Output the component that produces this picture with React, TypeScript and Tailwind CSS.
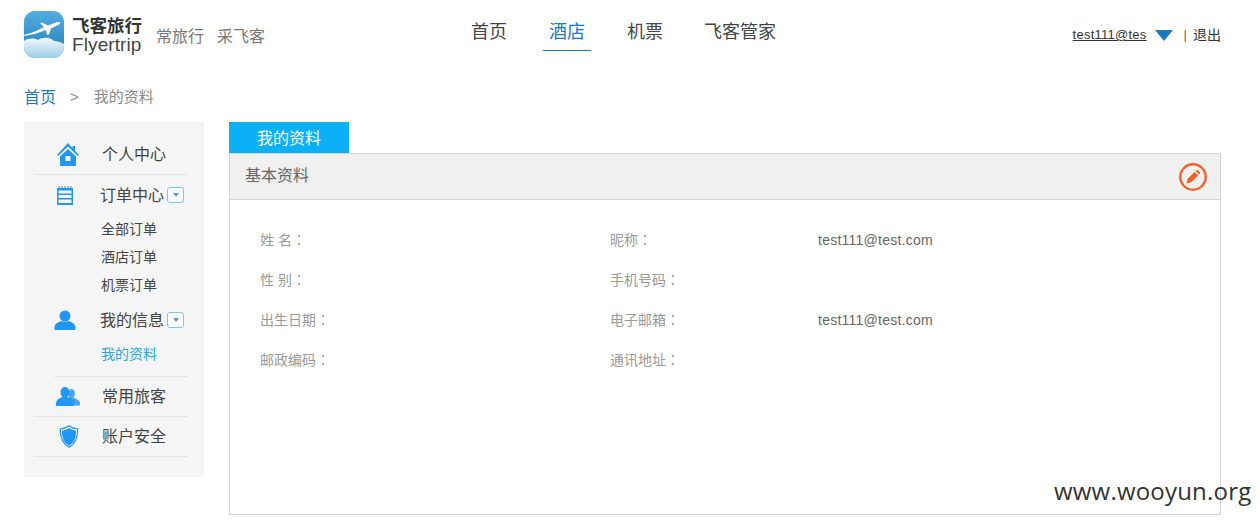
import React from 'react';

const cjk = "font-['Liberation_Sans','Noto_Sans_CJK_SC',sans-serif]";

function Logo() {
  return (
    <svg width="40" height="47" viewBox="0 0 40 47" className="shrink-0">
      <defs>
        <linearGradient id="sky" x1="0" y1="0" x2="0" y2="1">
          <stop offset="0" stopColor="#52ade0" />
          <stop offset="0.7" stopColor="#2f8cc4" />
          <stop offset="1" stopColor="#4b9ccf" />
        </linearGradient>
        <linearGradient id="cloud" x1="0" y1="0" x2="0" y2="1">
          <stop offset="0" stopColor="#f2f8fc" />
          <stop offset="1" stopColor="#9ccbe8" />
        </linearGradient>
        <clipPath id="logoClip">
          <rect width="40" height="47" rx="11" />
        </clipPath>
      </defs>
      <g clipPath="url(#logoClip)">
        <rect width="40" height="47" fill="url(#sky)" />
        <path d="M0 47V30c4-3 10-3 14-1 4-3 12-3 16 1 3 0 7 1 10 3v14z" fill="url(#cloud)" />
        <path d="M0 24c8-2 14-5 20-8l-4-4 2-.5 6 3 8-3c3-1 6 0 3 2l-8 4-2 6-2 .5-1-5c-7 3-14 5-22 6z" fill="#fff" />
      </g>
    </svg>
  );
}

function HomeIcon() {
  return (
    <svg width="24" height="24" viewBox="0 0 24 24">
      <path fill="#2196f3" d="M12 1 1 13l1.2 1L12 4.5 21.8 14l1.2-1-4-4.300V4h-2.500v2.200zM4 14.500V24h16v-9.500l-8-7.500zM9.500 14h5v5h-5z" fillRule="evenodd" />
    </svg>
  );
}

function ListIcon() {
  return (
    <svg width="18" height="20" viewBox="0 0 18 20">
      <path fill="#2196f3" fillRule="evenodd" d="M1 3h1.500V1h1v2h2V1h1v2h2V1h1v2h2V1h1v2h2V1h1v2H17v17H1zM2.500 5.500v3h13v-3zm0 4.500v3h13v-3zm0 4.500v3.500h13v-3.500z" />
    </svg>
  );
}

function UserIcon() {
  return (
    <svg width="22" height="20" viewBox="0 0 22 20">
      <circle cx="11" cy="6" r="5.500" fill="#2196f3" />
      <path fill="#2196f3" d="M7.500 11c1 1 6 1 7 0 3 1 6.500 2.500 7 6v3H.5v-3c.5-3.500 4-5 7-6z" />
    </svg>
  );
}

function UsersIcon() {
  return (
    <svg width="24" height="19" viewBox="0 0 24 19">
      <path fill="#2196f3" d="M15 2c2.500 0 3.800 2 3.800 4.500 0 1.800-.8 3.200-1.800 4 2.500 1 6.500 2.500 7 5.500v2.500h-6c0-3-2.500-5.500-5-6.500V9c-.5-4 .5-7 2-7z" opacity="0.85" />
      <path fill="#2196f3" d="M9 0c2.800 0 4.500 2.400 4.500 5.500 0 2-.9 3.700-2 4.500 3 1 6.500 3 6.500 6.500V19H0v-2.500C0 13 3.500 11 6.500 10c-1.100-.8-2-2.500-2-4.500C4.500 2.400 6.200 0 9 0z" />
    </svg>
  );
}

function ShieldIcon() {
  return (
    <svg width="20" height="23" viewBox="0 0 20 23" className="ml-[2px]">
      <path fill="none" stroke="#2196f3" strokeWidth="1.200" d="M10 .8c2.500 2 5.500 3 8.800 3.200 0 7-1 14-8.800 18.200C2.200 18 1.200 11 1.200 4 4.500 3.800 7.500 2.800 10 .8z" />
      <path fill="#2196f3" d="M10 3c2.200 1.500 4.500 2.400 7 2.700 0 5.800-1 11.500-7 15-6-3.500-7-9.200-7-15C5.500 5.400 7.800 4.500 10 3z" />
    </svg>
  );
}

function Toggle() {
  return (
    <span className="ml-[3px] flex h-[16px] w-[17px] items-center justify-center rounded-[3px] border border-[#7cc4ea] bg-white">
      <span className="h-0 w-0 border-x-[3.500px] border-t-[4px] border-x-transparent border-t-[#5a9fc8]" />
    </span>
  );
}

function MenuRow({ icon, label, toggle, short }: { icon: React.ReactNode; label: string; toggle?: boolean; short?: boolean }) {
  return (
    <div className={`flex items-center ${short ? 'h-[39px]' : 'h-[40px]'}`}>
      <div className={`flex shrink-0 justify-center ${toggle ? 'w-[62px]' : 'w-[68px]'}`}>{icon}</div>
      <span className={`text-[16px] text-[#444] ${toggle ? 'ml-[4px]' : ''} ${short ? '' : 'pt-[2px]'}`}>{label}</span>
      {toggle && <Toggle />}
    </div>
  );
}

function SubItem({ label, active }: { label: string; active?: boolean }) {
  return (
    <div className={`flex h-[28px] items-center pl-[67px] text-[14px] ${active ? 'text-[#29a5e3]' : 'text-[#444]'}`}>
      {label}
    </div>
  );
}

function Field({ label, value }: { label: string; value?: string }) {
  return (
    <div className="flex h-[40px] items-center">
      <span className="w-[208px] shrink-0 text-[14px] text-[#999]">
        {label}
        <span className="font-['Noto_Sans_CJK_TC',sans-serif]">：</span>
      </span>
      {value && <span className="text-[14px] tracking-[0.25px] text-[#666]">{value}</span>}
    </div>
  );
}

export default function App() {
  return (
    <div className={`relative h-[520px] w-[1260px] overflow-hidden bg-white ${cjk}`}>
      <header className="flex h-[70px] items-start pl-[24px] pr-[39px] pt-[11px]">
        <Logo />
        <div className="ml-[8px] mt-[6px] w-[72px] leading-none">
          <div className="text-[17.500px] font-bold leading-[19px] whitespace-nowrap text-[#333]">飞客旅行</div>
          <div className="whitespace-nowrap text-[19px] leading-[17px] tracking-[0.1px] text-[#444]">Flyertrip</div>
        </div>
        <div className="ml-[12px] mt-[14px] whitespace-nowrap text-[16px] text-[#777]">
          常旅行<span className="ml-[13px]">采飞客</span>
        </div>
        <nav className="ml-[206px] flex text-[18px] text-[#444]">
          <a className="flex h-[40px] w-[36px] items-center justify-center whitespace-nowrap pt-[3px]">首页</a>
          <a className="ml-[36px] flex h-[40px] w-[48px] items-center justify-center whitespace-nowrap border-b border-[#1a78c2] pt-[3px] text-[#1a78c2]">酒店</a>
          <a className="ml-[36px] flex h-[40px] w-[36px] items-center justify-center whitespace-nowrap pt-[3px]">机票</a>
          <a className="ml-[41px] flex h-[40px] w-[72px] items-center justify-center whitespace-nowrap pt-[3px]">飞客管家</a>
        </nav>
        <div className="ml-auto mt-[14px] flex h-[20px] items-center text-[13px] text-[#333]">
          <a className="tracking-[0.25px] underline">test111@tes</a>
          <span className="ml-[8px] h-0 w-0 border-x-[9px] border-t-[11px] border-x-transparent border-t-[#1a78c2]" />
          <span className="ml-[11px] text-[#666]">|</span>
          <span className="ml-[6px] text-[14px]">退出</span>
        </div>
      </header>

      <div className="flex h-[52px] items-start px-[24px] pt-[17px] text-[15px] leading-[20px] text-[#888]">
        <a className="pt-[1px] text-[16px] text-[#1a78c2]">首页</a>
        <span className="ml-[14px]">&gt;</span>
        <span className="ml-[15px]">我的资料</span>
      </div>

      <div className="flex items-start gap-[25px] pl-[24px] pr-[39px]">
        <aside className="h-[355px] w-[180px] shrink-0 bg-[#f5f5f5] pl-[10px] pr-[16px] pt-[12px]">
          <MenuRow icon={<HomeIcon />} label="个人中心" />
          <div className="border-t border-[#e4e4e4]" />
          <MenuRow icon={<ListIcon />} label="订单中心" toggle />
          <SubItem label="全部订单" />
          <SubItem label="酒店订单" />
          <SubItem label="机票订单" />
          <div className="pt-[1px]">
            <MenuRow icon={<UserIcon />} label="我的信息" toggle />
          </div>
          <SubItem label="我的资料" active />
          <div className="ml-[20px] mt-[8px] border-t border-[#e4e4e4]" />
          <MenuRow icon={<UsersIcon />} label="常用旅客" short />
          <div className="border-t border-[#e4e4e4]" />
          <MenuRow icon={<ShieldIcon />} label="账户安全" short />
          <div className="border-t border-[#e4e4e4]" />
        </aside>

        <main className="min-w-0 flex-1">
          <div className="flex h-[31px] w-[120px] items-center justify-center bg-[#0cb0f7] pt-[2px] text-[16px] text-white">我的资料</div>
          <section className="h-[362px] border border-[#d4d4d4]">
            <div className="flex h-[46px] items-center justify-between border-b border-[#d4d4d4] bg-[#f0f0f0] pl-[15px] pr-[13px]">
              <span className="pb-[1px] text-[16px] text-[#666]">基本资料</span>
              <svg width="28" height="28" viewBox="0 0 28 28">
                <circle cx="14" cy="14" r="12.700" fill="none" stroke="#f26227" strokeWidth="2.400" />
                <path fill="#f26227" d="M7.500 20.500l1.200-4.800 6.800-6.800 3.600 3.600-6.800 6.800zM16.500 7.900l.5-.5c.6-.6 1.500-.6 2.100 0l1.500 1.500c.6.6.6 1.500 0 2.100l-.5.5z" />
              </svg>
            </div>
            <div className="grid grid-cols-[350px_1fr] pl-[30px] pt-[20px]">
              <Field label="姓 名" />
              <Field label="昵称" value="test111@test.com" />
              <Field label="性 别" />
              <Field label="手机号码" />
              <Field label="出生日期" />
              <Field label="电子邮箱" value="test111@test.com" />
              <Field label="邮政编码" />
              <Field label="通讯地址" />
            </div>
          </section>
        </main>
      </div>

      {/* site watermark lies over the panel corner */}
      <div className="absolute left-[1054px] top-[476px] font-['Open_Sans',sans-serif] text-[24px] leading-[30px] tracking-[0.200px] text-[#333]">
        www.wooyun.org
      </div>
    </div>
  );
}
